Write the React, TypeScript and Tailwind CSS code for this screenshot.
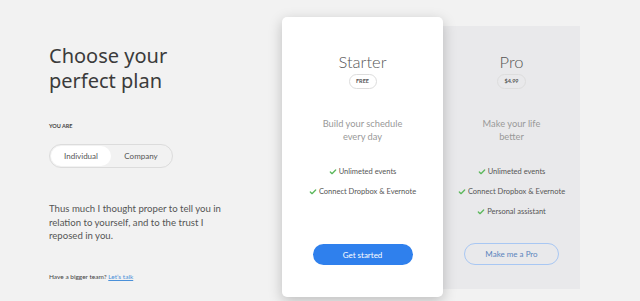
import { Check } from "lucide-react";

type Plan = {
  name: string;
  price: string;
  tagline: string[];
  features: string[];
  cta: string;
  featured?: boolean;
};

const plans: Plan[] = [
  {
    name: "Starter",
    price: "FREE",
    tagline: ["Build your schedule", "every day"],
    features: ["Unlimeted events", "Connect Dropbox & Evernote"],
    cta: "Get started",
    featured: true,
  },
  {
    name: "Pro",
    price: "$4.99",
    tagline: ["Make your life", "better"],
    features: ["Unlimeted events", "Connect Dropbox & Evernote", "Personal assistant"],
    cta: "Make me a Pro",
  },
];

function PlanCard({ plan }: { plan: Plan }) {
  return (
    <div
      className={
        plan.featured
          ? "relative z-10 mt-[17px] flex h-[280px] w-[161px] flex-col items-center rounded-[5px] bg-white shadow-[0_4px_14px_rgba(0,0,0,0.22)]"
          : "mt-[26px] flex h-[263px] w-[137px] flex-col items-center bg-[#e9e9eb]"
      }
    >
      <div className={plan.featured ? "mt-[35px]" : "mt-[26px]"} />
      <h2 className="font-['Lato'] text-[16.5px] font-light leading-[20px] text-[#555]">
        {plan.name}
      </h2>
      <span className="mt-[2px] flex h-[15px] min-w-[28px] items-center justify-center rounded-full border border-[#ddd] px-[6px] font-['Lato'] text-[5.5px] font-bold text-[#555]">
        {plan.price}
      </span>
      <div className="mt-[28px] text-center font-['Lato'] text-[9.3px] leading-[13px] text-[#999]">
        {plan.tagline.map((t) => (
          <div key={t}>{t}</div>
        ))}
      </div>
      <ul className="mt-[24px] flex flex-col items-center gap-[10px] font-['Lato'] text-[7.5px] leading-[10px] text-[#555]">
        {plan.features.map((f) => (
          <li key={f} className="flex items-center gap-[2px]">
            <Check className="h-[8px] w-[8px] text-[#5cb85c]" strokeWidth={4} />
            {f}
          </li>
        ))}
      </ul>
      <div className="flex-1" />
      <button
        className={
          plan.featured
            ? "mb-[32px] h-[21px] w-[100px] rounded-full bg-[#2f80ed] font-['Lato'] text-[8px] text-white"
            : "mb-[24px] h-[22px] w-[95px] rounded-full border border-[#a8c7f3] font-['Lato'] text-[8px] text-[#5b84bd]"
        }
      >
        {plan.cta}
      </button>
    </div>
  );
}

export default function App() {
  return (
    <div className="flex h-[301px] w-[640px] overflow-hidden bg-[#f2f2f2]">
      {/* Intro */}
      <div className="flex w-[282px] flex-col pl-[49px] pt-[43px]">
        <h1 className="font-['Noto_Sans'] text-[20px] leading-[25px] text-[#3b3b3b]">
          Choose your
          <br />
          perfect plan
        </h1>
        <p className="mt-[29px] font-['Lato'] text-[5.5px] font-bold uppercase text-[#444]">
          You are
        </p>
        <div className="mt-[14px] flex h-[24px] w-[124px] items-center rounded-full border border-[#dcdcdc] p-[1px] font-['Lato'] text-[8px] text-[#555]">
          <span className="flex h-full w-[60px] items-center justify-center rounded-full bg-white">
            Individual
          </span>
          <span className="flex flex-1 items-center justify-center">Company</span>
        </div>
        <p className="mt-[34px] w-[180px] font-['Lato'] text-[9.6px] leading-[13.3px] text-[#555]">
          Thus much I thought proper to tell you in relation to yourself, and to the trust I reposed in you.
        </p>
        <p className="mt-[30px] font-['Lato'] text-[6.5px] text-[#444]">
          Have a bigger team?{" "}
          <a href="#" className="text-[#4a90d9] underline">
            Let’s talk
          </a>
        </p>
      </div>

      {/* Plans */}
      <div className="flex items-start">
        {plans.map((p) => (
          <PlanCard key={p.name} plan={p} />
        ))}
      </div>
    </div>
  );
}
